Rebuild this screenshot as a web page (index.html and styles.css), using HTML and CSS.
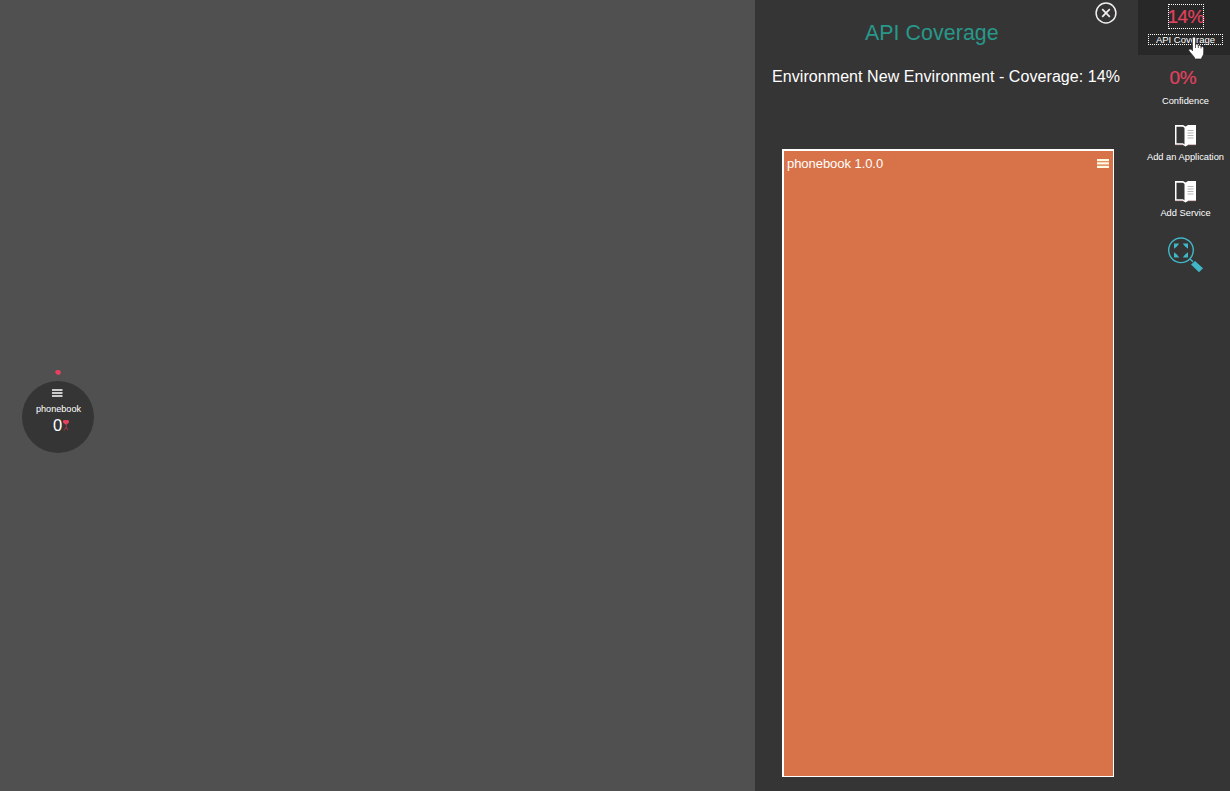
FILE: index.html
```html
<!DOCTYPE html>
<html lang="en">
<head>
<meta charset="utf-8">
<title>API Coverage</title>
<link rel="stylesheet" href="styles.css">
</head>
<body>
<div class="app">
  <main class="canvas">
    <div class="node-wrap">
      <svg class="node-dot" width="6" height="5" viewBox="0 0 6 5"><path d="M1 .3 3 0l2 .5L6 2 5.200 4.300 3.500 5 1.500 4.300 0 2.500z" fill="#e8405f"/></svg>
      <div class="node">
        <svg class="node-menu" width="11" height="8" viewBox="0 0 11 8"><path d="M0 0h10.500v2H0zM0 3h10.500v2H0zM0 6h10.500v2H0z" fill="#ccc"/></svg>
        <span class="node-name">phonebook</span>
        <div class="node-count"><span>0</span><svg width="6" height="11" viewBox="0 0 6 11"><path d="M0 1 1 0h1.300L3 .6 3.700 0H5l1 1v1.500L3 5 0 2.500z" fill="#e8405f"/><path d="M2.500 5h1v2L5 10.500M3 7 1 10.500M2 8.500h2" fill="none" stroke="#8b394a"/></svg></div>
      </div>
    </div>
  </main>
  <section class="panel">
    <div class="panel-top">
      <h1 class="title">API Coverage</h1>
      <svg class="close" width="22" height="22" viewBox="0 0 22 22" fill="none" stroke="#f2f0ee"><circle cx="11" cy="11" r="9.900" stroke-width="1.500"/><path d="m7.200 7.200 7.600 7.600m0-7.600-7.600 7.600" stroke-width="1.700"/></svg>
    </div>
    <p class="summary">Environment New Environment - Coverage: 14%</p>
    <div class="tile">
      <span class="tile-name">phonebook 1.0.0</span>
      <svg class="tile-menu" width="12" height="9" viewBox="0 0 12 9"><path d="M0 0h12v2.200H0zM0 3.300h12v2.200H0zM0 6.800h12V9H0z" fill="#fffbe0"/></svg>
    </div>
  </section>
  <nav class="sidebar">
    <a class="item active"><span class="value focus">14%</span><span class="label focus">API Coverage</span></a>
    <a class="item confidence"><span class="value">0%</span><span class="label">Confidence</span></a>
    <a class="item application">
      <svg width="21" height="22" viewBox="0 0 21 22"><path d="M0 0h8l2.500 1.500L13 0h8v20h-8l-2.500 1.500L8 20H0z" fill="#fff"/><path d="M1.500 1.700H8l1.500 1.200V19.500L8 18.300H1.500z" fill="#353535"/><path d="M12.500 5.500h6M12.500 8h6M12.500 10.500h6M12.500 13h6" stroke="#b5b5b5"/><path d="M0 19.700h8m5 0h8" stroke="#b99391" stroke-width=".7"/></svg>
      <span class="label">Add an Application</span>
    </a>
    <a class="item service">
      <svg width="21" height="22" viewBox="0 0 21 22"><path d="M0 0h8l2.500 1.500L13 0h8v20h-8l-2.500 1.500L8 20H0z" fill="#fff"/><path d="M1.500 1.700H8l1.500 1.200V19.500L8 18.300H1.500z" fill="#353535"/><path d="M12.500 5.500h6M12.500 8h6M12.500 10.500h6M12.500 13h6" stroke="#b5b5b5"/><path d="M0 19.700h8m5 0h8" stroke="#b99391" stroke-width=".7"/></svg>
      <span class="label">Add Service</span>
    </a>
    <a class="zoom-fit">
      <svg width="36" height="36" viewBox="0 0 36 36"><circle cx="13" cy="13.300" r="12.300" fill="none" stroke="#40b6c6" stroke-width="1.400"/><path d="M6 6.500h5.200L9.500 8.700 8.300 10 6 11.700zM20 6.500v5.200L17.700 10l-1.200-1.300-1.700-2.200zM6 20.500v-5.200L8.300 17l1.200 1.300 1.700 2.200zM20 20.500h-5.200l1.700-2.200 1.200-1.300 2.300-1.700z" fill="#40b6c6"/><path d="m22 22 3 2.800" stroke="#40b6c6" stroke-width="1.500"/><path d="m27 24 8 7.200-4 4-8-7.700z" fill="#40b6c6"/></svg>
    </a>
    <svg class="cursor" width="17" height="23" viewBox="0 0 17 23"><path d="M4.500 1.500c0-2 3-2 3 0V8c0-1.500 2.500-1.500 2.800 0V9c.3-1.300 2.500-1 2.700.3v.9c.5-1.200 2.700-.7 2.700 1V16c0 2-1.500 3.500-2 5v1H6.500v-1.500L1 14c-.8-1.500.7-2.800 2-1.700l1.500 1.500z" fill="#fff" stroke="#222" stroke-width=".7"/><path d="M7.500 7.500V11m2.800-2.500V11m2.700-1.500v2" stroke="#333" stroke-width=".8"/></svg>
  </nav>
</div>
</body>
</html>
```
FILE: styles.css
```css
* { box-sizing: border-box; }
body {
  margin: 0;
  background: #505050;
  color: #fff;
  font-family: "Liberation Sans", Arial, sans-serif;
}
svg { display: block; flex: none; }
.app { display: flex; height: 791px; overflow: hidden; }
.canvas { flex: 1; position: relative; background: #505050; }
.node-wrap {
  position: absolute;
  left: 22px;
  top: 370px;
  width: 72px;
  display: flex;
  flex-direction: column;
  align-items: center;
}
.node {
  width: 72px;
  height: 72px;
  margin-top: 6px;
  padding-top: 8px;
  border-radius: 50%;
  background: #353535;
  display: flex;
  flex-direction: column;
  align-items: center;
}
.node-menu { margin-right: 1px; }
.node-name { margin: 6px 0 0 1px; font-size: 9.15px; line-height: 12px; white-space: nowrap; }
.node-count { display: flex; align-items: center; gap: 1px; margin: 1px 0 0 6px; font-size: 16.5px; line-height: 18px; }
.panel {
  width: 383px;
  background: #353535;
  display: flex;
  flex-direction: column;
}
.panel-top { display: flex; justify-content: space-between; height: 64px; padding: 2px 21px 0 110px; }
.title { margin: 18px 0 0; color: #28988a; font-size: 21.33px; font-weight: 400; line-height: 26px; letter-spacing: .08px; white-space: nowrap; }
.summary { margin: 3px 0 0 17px; font-size: 16px; line-height: 20px; letter-spacing: .07px; white-space: nowrap; }
.tile {
  width: 332px;
  height: 628px;
  margin: 62px 0 0 27px;
  padding: 5px 4px 0 3px;
  display: flex;
  justify-content: space-between;
  background: #d87349;
  border: solid #fff;
  border-width: 2px 1px 1px 2px;
}
.tile-name { height: 16px; font-size: 13px; line-height: 16px; letter-spacing: -.05px; }
.tile-menu { margin-top: 3px; }
.sidebar { position: relative; width: 92px; background: #353535; }
.item { display: flex; flex-direction: column; align-items: center; padding-left: 3px; }
.active { height: 55px; padding-top: 4px; background: #282828; }
.value { font-size: 19px; line-height: 25px; color: #e04360; -webkit-text-stroke: .2px #e04360; }
.value.focus { width: 36px; height: 25px; line-height: 26px; outline: 1px dotted #fff; outline-offset: -1px; text-align: center; letter-spacing: -.6px; }
.label { font-size: 9.3px; line-height: 12px; white-space: nowrap; }
.label.focus { width: 75px; height: 11px; margin-top: 5px; font-size: 9.5px; line-height: 12px; outline: 1px dotted #fff; outline-offset: -1px; text-align: center; }
.confidence { padding-top: 10px; height: 68px; }
.confidence .value { margin-right: 5px; letter-spacing: -.2px; }
.confidence .label { margin-top: 5px; }
.application, .service { height: 56px; padding-top: 2px; }
.application .label, .service .label { margin-top: 4px; }
.zoom-fit { display: block; padding: 2px 0 0 30px; }
.cursor { position: absolute; left: 50px; top: 37px; }
```
